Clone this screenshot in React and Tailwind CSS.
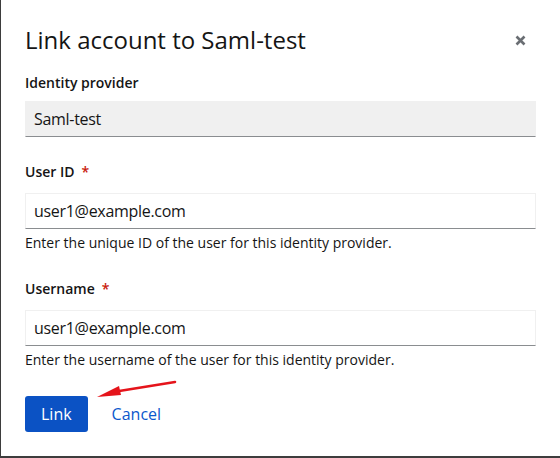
import { useState } from 'react';

const font = { fontFamily: '"Open Sans", "Noto Sans", sans-serif' };

function Field({ label, required, value, readOnly, help }) {
  return (
    <div className="flex flex-col">
      <label
        className={`text-[14px] leading-[21px] font-semibold text-[#151515] ${required ? 'mb-[11px]' : 'mb-2'}`}
      >
        {label}
        {required && <span className="text-[#c9190b] ml-[7px]">*</span>}
      </label>
      <div
        className={`h-9 flex items-center px-2 border border-[#f0f0f0] border-b-[#8a8d90] text-[16px] tracking-[-0.3px] text-[#151515] ${
          readOnly ? 'bg-[#f0f0f0]' : 'bg-white'
        }`}
      >
        {value}
      </div>
      {help && <p className="text-[14px] leading-[21px] text-[#151515] mt-[3px]">{help}</p>}
    </div>
  );
}

export default function App() {
  const [userId] = useState('user1@example.com');
  const [username] = useState('user1@example.com');

  return (
    <div className="w-[560px] h-[458px] bg-white" style={font}>
      <div className="relative h-full border-l border-b-2 border-[#3d3d3d] px-6 pt-6 pb-6 flex flex-col">
        {/* Header */}
        <div className="flex items-center justify-between">
          <h1 className="text-[24px] leading-8 font-medium text-[#151515]">
            Link account to Saml-test
          </h1>
          <button className="w-5 h-5 flex items-center justify-center mr-[6px] text-[#6a6e73]">
            <svg width="11" height="11" viewBox="0 0 11 11">
              <path d="M1.5 1.5 L9.5 9.5 M9.5 1.5 L1.5 9.5" stroke="currentColor" strokeWidth="2.6" strokeLinecap="butt" />
            </svg>
          </button>
        </div>

        {/* Body */}
        <div className="mt-4 flex flex-col gap-6">
          <Field label="Identity provider" value="Saml-test" readOnly />
          <Field
            label="User ID"
            required
            value={userId}
            help="Enter the unique ID of the user for this identity provider."
          />
          <div className="mt-[1px]">
            <Field
              label="Username"
              required
              value={username}
              help="Enter the username of the user for this identity provider."
            />
          </div>
        </div>

        {/* Footer */}
        <div className="mt-auto flex items-center gap-2">
          <button className="h-9 px-4 rounded-[3px] bg-[#0b52c4] text-white text-[16px]">Link</button>
          <button className="h-9 px-4 text-[#0b58cc] text-[16px]">Cancel</button>
        </div>

        {/* annotation arrow */}
        <svg className="absolute left-[90px] top-[378px]" width="90" height="24" viewBox="0 0 90 24">
          <path d="M84 4 L22 14" stroke="#e5141b" strokeWidth="2.5" strokeLinecap="round" />
          <path d="M6 19 L28 8 L30 17 Z" fill="#e5141b" />
        </svg>
      </div>
    </div>
  );
}
